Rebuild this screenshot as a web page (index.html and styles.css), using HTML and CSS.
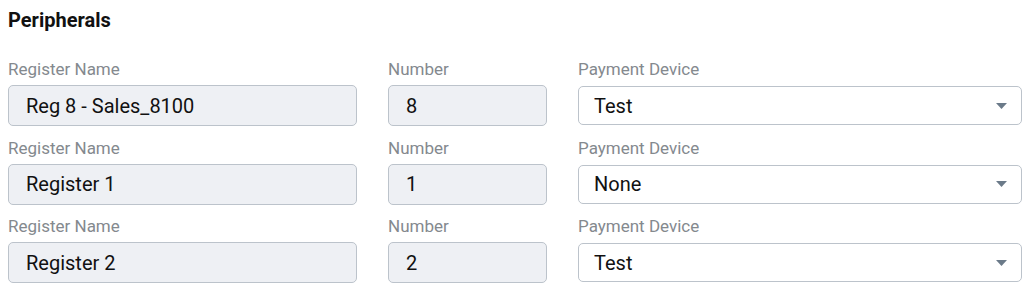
FILE: index.html
```html
<!DOCTYPE html>
<html lang="en">
<head>
  <meta charset="UTF-8">
  <meta name="viewport" content="width=device-width, initial-scale=1.0">
  <title>Peripherals</title>
  <link rel="stylesheet" href="styles.css">
</head>
<body>
  <div class="panel">
    <h2 class="title">Peripherals</h2>

    <div class="rows">
      <div class="row">
        <div class="field">
          <label>Register Name</label>
          <input class="box readonly" type="text" value="Reg 8 - Sales_8100" readonly>
        </div>
        <div class="field">
          <label>Number</label>
          <input class="box readonly" type="text" value="8" readonly>
        </div>
        <div class="field">
          <label>Payment Device</label>
          <div class="box select">
            <span>Test</span>
            <svg class="caret" width="11" height="6" viewBox="0 0 11 6"><path d="M0 0h11L5.5 6z"/></svg>
          </div>
        </div>
      </div>

      <div class="row">
        <div class="field">
          <label>Register Name</label>
          <input class="box readonly" type="text" value="Register 1" readonly>
        </div>
        <div class="field">
          <label>Number</label>
          <input class="box readonly" type="text" value="1" readonly>
        </div>
        <div class="field">
          <label>Payment Device</label>
          <div class="box select">
            <span>None</span>
            <svg class="caret" width="11" height="6" viewBox="0 0 11 6"><path d="M0 0h11L5.5 6z"/></svg>
          </div>
        </div>
      </div>

      <div class="row">
        <div class="field">
          <label>Register Name</label>
          <input class="box readonly" type="text" value="Register 2" readonly>
        </div>
        <div class="field">
          <label>Number</label>
          <input class="box readonly" type="text" value="2" readonly>
        </div>
        <div class="field">
          <label>Payment Device</label>
          <div class="box select">
            <span>Test</span>
            <svg class="caret" width="11" height="6" viewBox="0 0 11 6"><path d="M0 0h11L5.5 6z"/></svg>
          </div>
        </div>
      </div>
    </div>
  </div>
</body>
</html>
```

FILE: styles.css
```css
body {
  margin: 0;
  padding: 8px;
  background: #fff;
  color: #111;
  font-family: Roboto, "Liberation Sans", sans-serif;
}
.panel {
  width: 1014px;
}
.title {
  margin: 0;
  font-size: 20px;
  line-height: 24px;
  font-weight: 700;
  color: #111;
}
.rows {
  margin-top: 27px;
  display: flex;
  flex-direction: column;
  gap: 11.5px;
}
.row {
  display: grid;
  grid-template-columns: 349px 159px 1fr;
  column-gap: 31px;
  align-items: start;
}
.field {
  display: flex;
  flex-direction: column;
}
.field label {
  font-size: 17px;
  line-height: 20px;
  color: #84898e;
  margin-bottom: 6px;
}
.box {
  box-sizing: border-box;
  height: 41px;
  border: 1.5px solid #bcc3cb;
  border-radius: 5px;
  font-family: Roboto, "Liberation Sans", sans-serif;
  font-size: 20px;
  color: #111;
  padding: 0 17px;
  width: 100%;
  margin: 0;
  outline: none;
}
.readonly {
  background: #eef0f4;
}
.select {
  height: 39px;
  margin-top: 1px;
  background: #fff;
  display: flex;
  align-items: center;
  justify-content: space-between;
  padding: 0 14px 0 15px;
}
.caret {
  fill: #6b7a89;
}
```
